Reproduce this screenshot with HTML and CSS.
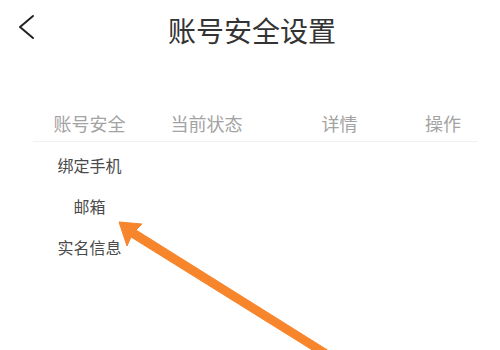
FILE: index.html
```html
<!DOCTYPE html>
<html lang="zh-CN">
<head>
<meta charset="utf-8">
<title>账号安全设置</title>
<link rel="stylesheet" href="styles.css">
</head>
<body>
<div class="page">
  <header class="topbar">
    <svg class="back" width="20" height="30" viewBox="0 0 20 30"><polyline points="16,3 3,14 16,25" fill="none" stroke="#222" stroke-width="2" stroke-linecap="round" stroke-linejoin="round"/></svg>
    <h1 class="title">账号安全设置</h1>
  </header>
  <section class="table">
    <div class="row head">
      <span>账号安全</span><span>当前状态</span><span>详情</span><span>操作</span>
    </div>
    <div class="body">
      <div class="row"><span>绑定手机</span><span></span><span></span><span></span></div>
      <div class="row"><span>邮箱</span><span></span><span></span><span></span></div>
      <div class="row"><span>实名信息</span><span></span><span></span><span></span></div>
    </div>
  </section>
  <svg class="arrow" width="500" height="350" viewBox="0 0 500 350">
    <polygon points="119,222 142,224 136,230 329,351 322,356 131,237 127,246" fill="#f7852c" stroke="#f7852c" stroke-width="1" stroke-linejoin="round"/>
  </svg>
</div>
</body>
</html>
```
FILE: styles.css
```css
html, body {
  margin: 0;
  padding: 0;
  background: #fff;
}
.page {
  position: relative;
  width: 500px;
  height: 350px;
  overflow: hidden;
  font-family: "Noto Sans CJK SC", "Noto Sans", sans-serif;
}
.topbar {
  position: relative;
  height: 60px;
  display: flex;
  align-items: center;
  justify-content: center;
}
.back {
  position: absolute;
  left: 17px;
  top: 13px;
}
.title {
  margin: 0;
  font-size: 28px;
  font-weight: 400;
  color: #333;
  line-height: 60px;
  padding-left: 4px;
}
.table {
  margin-top: 45px;
  padding-left: 33px;
  width: 445px;
}
.row {
  display: grid;
  grid-template-columns: 113px 121px 145px 62px;
  text-align: center;
  height: 41px;
  line-height: 41px;
  font-size: 16px;
  color: #4a4a4a;
}
.row.head {
  height: 36px;
  line-height: 36px;
  font-size: 18px;
  color: #a3a3a3;
  border-bottom: 1px solid #f1f1f1;
}
.body {
  padding-top: 3px;
}
.arrow {
  position: absolute;
  left: 0;
  top: 0;
  pointer-events: none;
}
```
